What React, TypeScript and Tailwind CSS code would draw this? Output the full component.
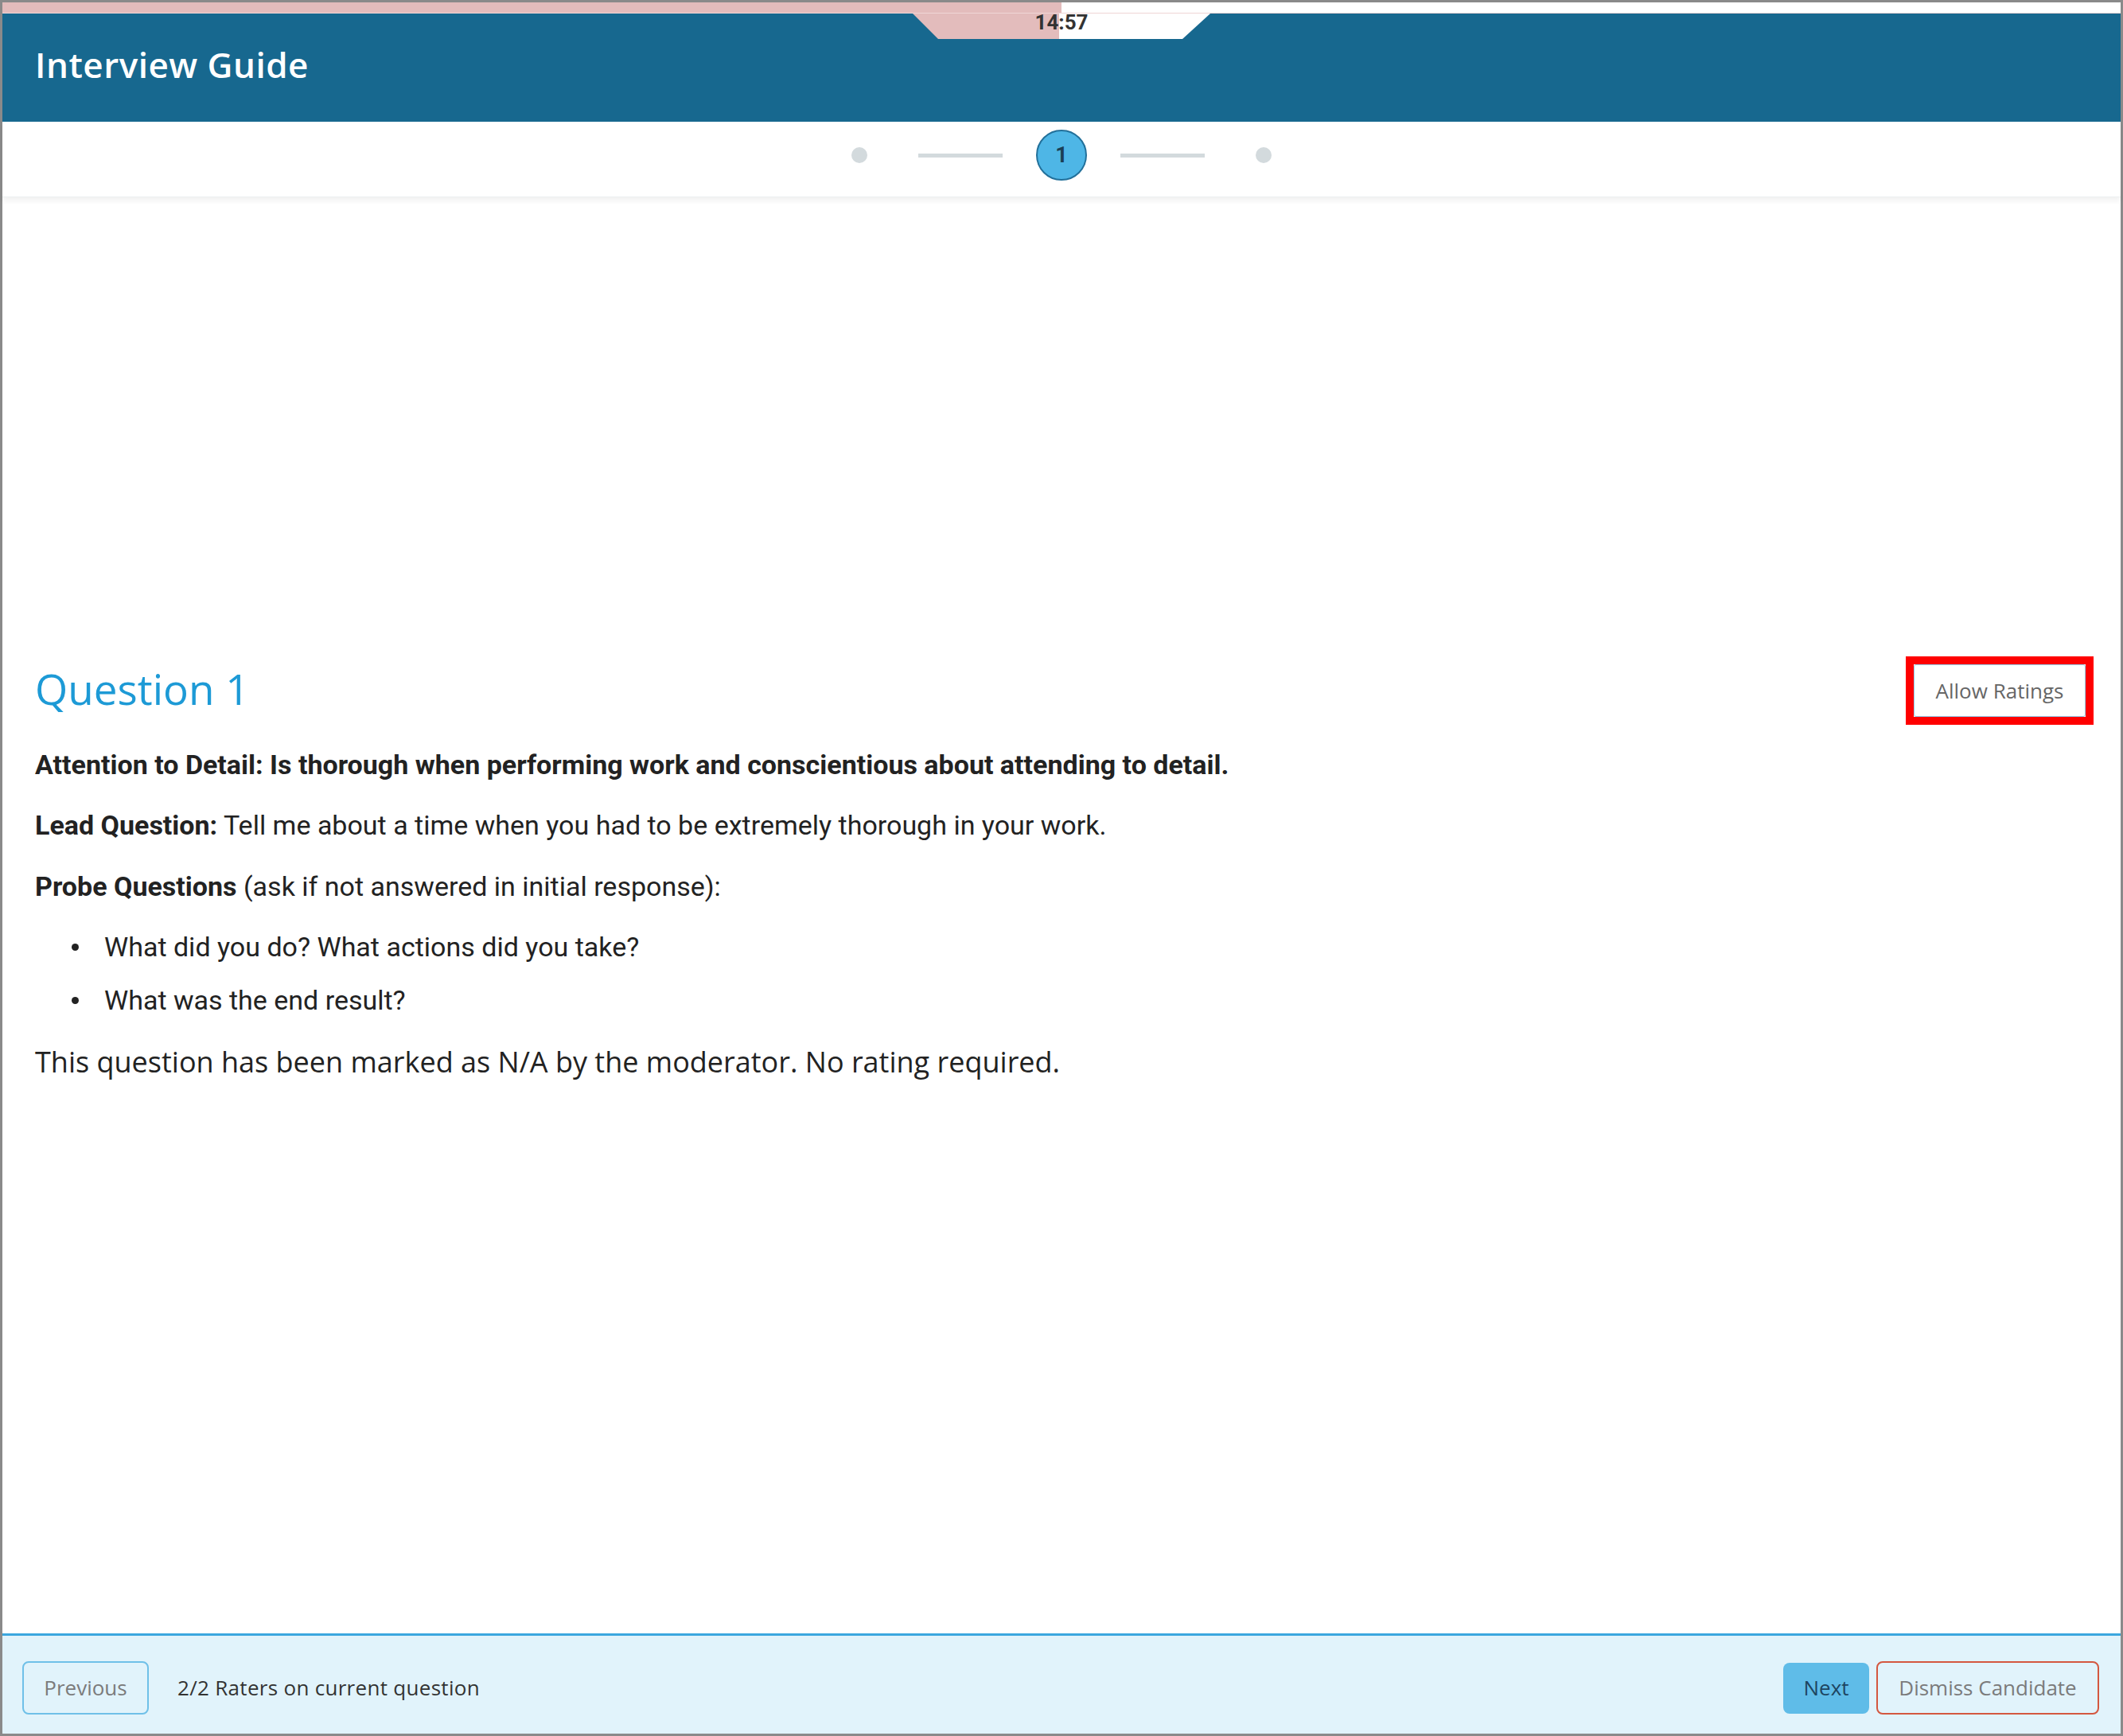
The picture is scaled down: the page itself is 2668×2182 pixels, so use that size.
import React from "react";

const steps = ["dot", "line", "current", "line", "dot"];

function TimerTab() {
  return (
    <div className="absolute top-0 left-1/2 -translate-x-1/2 w-[374px] h-[32px] bg-[linear-gradient(to_right,#e3bcbc_49.2%,#ffffff_49.2%)] [clip-path:polygon(0_0,100%_0,calc(100%-35px)_100%,32px_100%)] flex justify-center">
      <span className="font-['Roboto'] font-bold text-[26px] leading-[26px] -mt-[2px] text-[#333]">
        14:57
      </span>
    </div>
  );
}

function Stepper() {
  return (
    <div className="h-[95px] pb-[10px] flex items-center justify-center gap-[42px] bg-white border-b border-[#eceff0] shadow-[0_5px_6px_rgba(0,0,0,0.05)] relative z-10">
      {steps.map((s, i) => {
        if (s === "line")
          return <div key={i} className="w-[106px] h-[5px] bg-[#d3dadd]" />;
        if (s === "dot")
          return (
            <div key={i} className="w-[64px] flex justify-center">
              <div className="w-[20px] h-[20px] rounded-full bg-[#d3dadd]" />
            </div>
          );
        return (
          <div
            key={i}
            className="w-[64px] h-[64px] rounded-full bg-[#4eb6e6] border-2 border-[#22709a] flex items-center justify-center font-['Roboto'] font-bold text-[27px] text-[#1b3f55]"
          >
            1
          </div>
        );
      })}
    </div>
  );
}

export default function App() {
  return (
    <div className="w-full h-[2182px] border-[3px] border-[#8a8a8a] flex flex-col bg-white font-['Roboto',sans-serif]">
      {/* timer progress */}
      <div className="h-[14px] bg-[linear-gradient(to_right,#e3bcbc_50%,#ffffff_50%)] border-b border-[#f0d6d6]" />

      <header className="relative h-[136px] bg-[#17688f] flex items-center px-[41px] pb-[8px]">
        <TimerTab />
        <h1 className="font-['Open_Sans'] font-semibold text-[44px] text-white tracking-[0.5px]">
          Interview Guide
        </h1>
      </header>

      <Stepper />

      <main className="flex-1 pt-[577px] pl-[41px] pr-[34px] text-[#222]">
        <div className="flex items-center justify-between">
          <h2 className="font-['Open_Sans'] text-[53px] leading-none text-[#1d9ad6] -mt-[6px]">
            Question 1
          </h2>
          <div className="border-[10px] border-[#ff0000]">
            <button className="w-[216px] h-[66px] border border-[#8fd0ef] rounded-[3px] bg-white font-['Open_Sans'] text-[26px] text-[#666]">
              Allow Ratings
            </button>
          </div>
        </div>

        <p className="mt-[30px] text-[34px] leading-[40px] font-bold">
          Attention to Detail: Is thorough when performing work and conscientious about attending to detail.
        </p>
        <p className="mt-[36px] text-[34px] leading-[40px]">
          <span className="font-bold">Lead Question:</span> Tell me about a time when you had to be extremely thorough in your work.
        </p>
        <p className="mt-[37px] text-[34px] leading-[40px]">
          <span className="font-bold">Probe Questions</span> (ask if not answered in initial response):
        </p>
        <ul className="mt-[36px] flex flex-col gap-[27px] text-[34px] leading-[40px]">
          {["What did you do? What actions did you take?", "What was the end result?"].map((t) => (
            <li key={t} className="flex items-center pl-[46px]">
              <span className="w-[9px] h-[9px] rounded-full bg-[#222] mr-[32px]" />
              {t}
            </li>
          ))}
        </ul>
        <p className="mt-[36px] font-['Open_Sans'] text-[36px] leading-[44px] text-[#222]">
          This question has been marked as N/A by the moderator. No rating required.
        </p>
      </main>

      <footer className="h-[126px] border-t-[3px] border-[#3ba7de] bg-[#e1f3fb] flex items-start justify-between pt-[32px] pl-[25px] pr-[27px] font-['Open_Sans'] text-[26px]">
        <div className="flex items-center gap-[36px]">
          <button className="w-[159px] h-[67px] border-2 border-[#6fc0e8] rounded-[8px] text-[#7b7b7b]">
            Previous
          </button>
          <span className="text-[#333] tracking-[0.3px]">2/2 Raters on current question</span>
        </div>
        <div className="flex items-center gap-[9px]">
          <button className="w-[108px] h-[64px] rounded-[8px] bg-[#5fbce8] text-[#1e4560]">
            Next
          </button>
          <button className="w-[280px] h-[67px] border-2 border-[#d4573f] rounded-[8px] text-[#7b7b7b]">
            Dismiss Candidate
          </button>
        </div>
      </footer>
    </div>
  );
}
